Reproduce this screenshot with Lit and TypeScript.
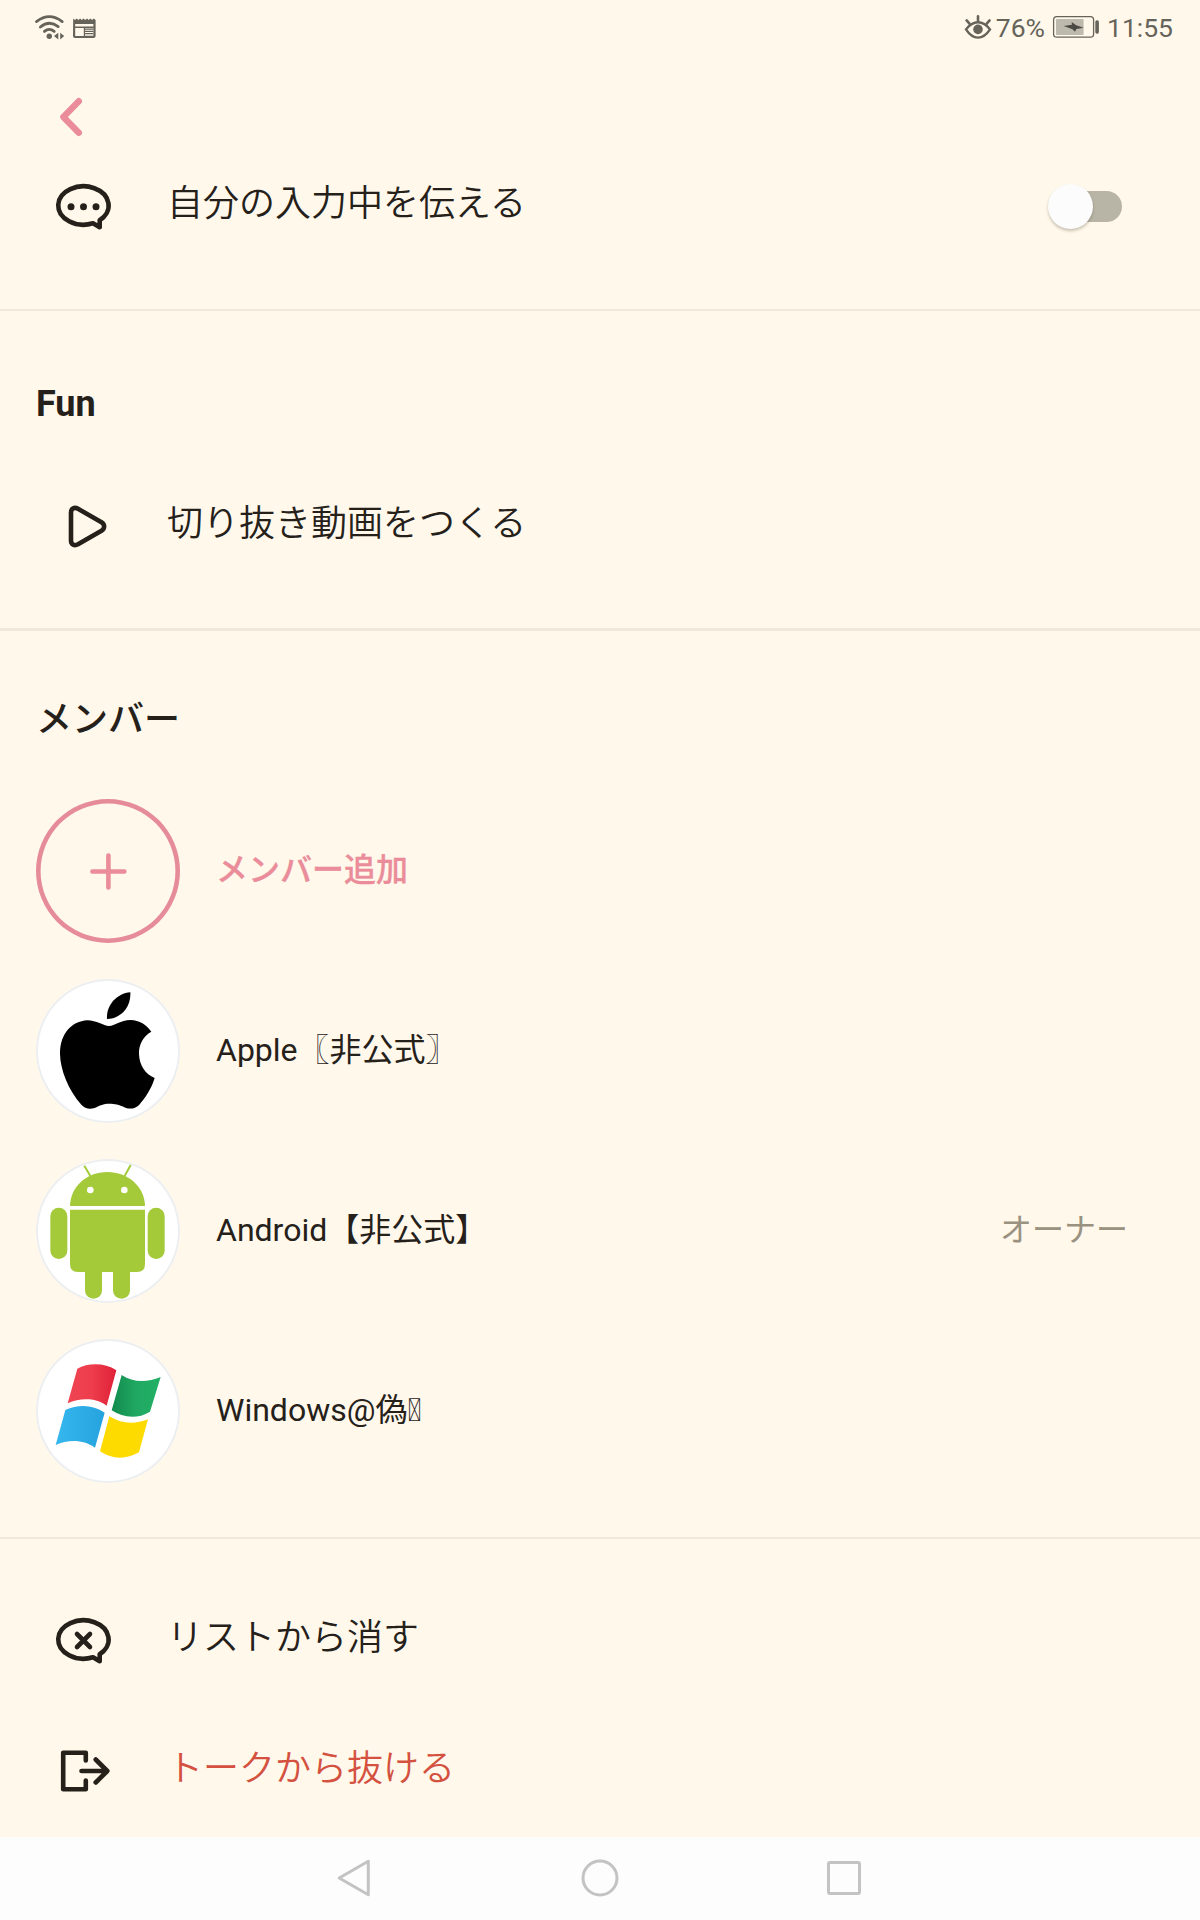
import { LitElement, html, css, svg, TemplateResult } from "lit";
import { customElement, property } from "lit/decorators.js";

const bubble = svg`<path d="M93 223.3A25.2 19.2 0 1 1 99.7 220.2V227.3Z" />`;

const icons: Record<string, TemplateResult> = {
  typing: html`<svg viewBox="50 178 68 56">
    <g class="stroke">${bubble}</g>
    <circle cx="71" cy="206.7" r="3.5" /><circle cx="83.5" cy="206.7" r="3.5" /><circle cx="96" cy="206.7" r="3.5" />
  </svg>`,
  play: html`<svg viewBox="50 498 68 56">
    <path class="stroke" d="M71 512.5C71 508.3 74.5 506.8 78 508.8L101.5 522.3C105 524.5 105 528.6 101.5 530.8L78 544.3C74.5 546.2 71 544.7 71 540.5Z" />
  </svg>`,
  remove: html`<svg viewBox="50 178 68 56">
    <g class="stroke">${bubble}<path stroke-linecap="round" d="M77 200L90 213M90 200L77 213" /></g>
  </svg>`,
  leave: html`<svg viewBox="50 1743.5 68 56">
    <path class="stroke" stroke-linecap="round" d="M85.8 1761V1753.2H63.2V1789.8H85.8V1781M81.5 1771.5H107M95.7 1760L107.3 1771.5L95.7 1783" />
  </svg>`,
};

const avatars: Record<string, TemplateResult> = {
  apple: html`<svg viewBox="108 597 432 432">
    <path d="M391 637C394 680 362 717 321 717C318 677 350 640 391 637Z" />
    <path d="M327 738C345 738 360 720 392 720C418 721 440 734 454 755C430 768 416 793 417 822C418 856 436 882 464 894C455 925 435 955 418 974C405 987 390 988 376 983C355 973 345 971 328 971C310 971 300 976 284 984C268 989 255 986 244 974C205 930 181 870 180 822C180 760 215 724 262 721C290 721 310 738 327 738Z" />
  </svg>`,
  android: html`<svg viewBox="108 57 432 432">
    <g fill="#a4ca39">
      <path d="M210 198C211 140 260 96 322 96S434 140 435 198Z" />
      <path d="M210 209H435V372Q435 396 411 396H234Q210 396 210 372Z" />
      <rect x="151" y="203" width="51" height="154" rx="25.5" />
      <rect x="443" y="203" width="51" height="154" rx="25.5" />
      <path d="M255 380H306V451A25.5 25.5 0 0 1 255 451Z" />
      <path d="M339 380H390V451A25.5 25.5 0 0 1 339 451Z" />
    </g>
    <path d="M253 77L271 108M392 75L374 108" fill="none" stroke="#a4ca39" stroke-width="6" />
    <circle cx="271" cy="150" r="10" fill="#fff" /><circle cx="373" cy="150" r="10" fill="#fff" />
  </svg>`,
  windows: html`<svg viewBox="108 597 432 432">
    <defs>
      <linearGradient id="r"><stop stop-color="#f04553" /><stop offset=".5" stop-color="#ee3d4c" /><stop offset="1" stop-color="#df2038" /></linearGradient>
      <linearGradient id="g"><stop stop-color="#128a4c" /><stop offset=".5" stop-color="#20a862" /><stop offset="1" stop-color="#22b066" /></linearGradient>
      <linearGradient id="b"><stop stop-color="#36b7ee" /><stop offset="1" stop-color="#25a3de" /></linearGradient>
    </defs>
    <path fill="url(#r)" d="M232 686C265 668 315 668 349 691L320 797C285 772 240 774 203 790Z" />
    <path fill="url(#g)" d="M365 705C400 728 440 728 482 711L450 815C412 838 370 834 335 811Z" />
    <path fill="url(#b)" d="M196 810C235 792 280 794 314 818L285 923C250 898 205 898 167 915Z" />
    <path fill="#fedb00" d="M328 829C365 852 405 854 444 838L417 937C378 960 335 958 300 934Z" />
  </svg>`,
};

@customElement("status-bar")
class StatusBar extends LitElement {
  static styles = css`
    :host {
      display: flex;
      align-items: center;
      height: 54px;
      padding: 0 27px 0 34px;
      box-sizing: border-box;
      color: #66635a;
      font: 26.5px/54px Roboto, sans-serif;
    }
    svg { display: block; flex: none; }
    .space { flex: 1; }
    .percent, .time { padding-top: 1px; }
    .percent { margin: 0 7px 0 4px; }
    .time { margin-left: 7px; }
    .eye { margin-right: -1px; }
  `;
  render() {
    return html`
      <svg width="64" height="54" viewBox="34 0 64 54" fill="currentColor">
        <g fill="none" stroke="currentColor" stroke-width="2.8" stroke-linecap="round">
          <path d="M36.5 21.6Q49.3 11.6 62.2 21.6M40.4 27Q49.3 19.8 58.2 26.6M44.4 31.4Q49.3 27.4 54.2 31.4" />
        </g>
        <circle cx="49.3" cy="36.2" r="2.7" />
        <path d="M54 36L58.3 32.8V39.4ZM64.2 36L60.2 32.8V39.6Z" />
        <path d="M73.2 18.5L75 20L76.7 18.5L78.4 20L80.1 18.5L81.8 20L83.5 18.5L85.2 20L87 18.5L88.7 20L90.4 18.5L92.1 20L93.8 18.5L95.6 20V36Q95.6 38 93.6 38H75Q73 38 73 36ZM75.2 24V26.6H93.4V24ZM75.2 28V36H83.8V28ZM85 28V35.8H93.4V28Z" fill-rule="evenodd" />
        <path d="M85 29.2H93.4M85 31.4H93.4M85 33.6H93.4" stroke="currentColor" stroke-width="1.2" />
      </svg>
      <span class="space"></span>
      <svg class="eye" width="30" height="54" viewBox="962 0 30 54" fill="none" stroke="currentColor" stroke-linecap="round">
        <path stroke-width="2.4" d="M965 29.4Q970.3 22.3 977 22.3T989 29.4Q983.7 37.6 977 37.6T965 29.4Z" />
        <path stroke-width="2.6" d="M977 16.3V21M965.6 20.4L968.5 23.6M988.6 20.4L985.7 23.6" />
        <circle cx="977" cy="29.4" r="4.8" fill="currentColor" stroke="none" />
      </svg>
      <span class="percent">76%</span>
      <svg width="48" height="54" viewBox="1051 0 48 54">
        <rect x="1052.6" y="16.6" width="40" height="20.6" rx="3.2" fill="none" stroke="currentColor" stroke-width="1.3" />
        <rect x="1055" y="19" width="27.6" height="16" rx="1" fill="#bdb9ac" />
        <rect x="1094.3" y="20.3" width="3.6" height="13.4" rx="1.6" fill="currentColor" />
        <path d="M1062.7 26L1071 24.8L1070.6 22L1075.2 25.2L1082.6 27.8L1075.4 29L1074 31.8L1071.4 29.3Z" fill="#4b4943" />
      </svg>
      <span class="time">11:55</span>
    `;
  }
}

@customElement("setting-row")
class SettingRow extends LitElement {
  @property() icon = "";
  @property() label = "";
  @property({ type: Boolean, reflect: true }) danger = false;
  static styles = css`
    :host {
      display: flex;
      align-items: center;
      height: 56px;
      padding: 0 78px 0 50px;
      color: #25211a;
    }
    svg { display: block; width: 68px; height: 56px; fill: currentColor; flex: none; }
    .stroke { fill: none; stroke: currentColor; stroke-width: 4.6; stroke-linejoin: round; }
    .label {
      flex: 1;
      margin-left: 49px;
      padding-bottom: 11px;
      font: 350 36px/45px "Noto Sans CJK JP", sans-serif;
    }
    :host([danger]) .label { color: #d4513f; }
  `;
  render() {
    return html`${icons[this.icon]}<span class="label">${this.label}</span><slot></slot>`;
  }
}

@customElement("toggle-switch")
class ToggleSwitch extends LitElement {
  static styles = css`
    :host { display: flex; align-items: center; width: 74px; height: 46px; }
    .track { display: flex; align-items: center; width: 69px; height: 31px; margin-left: 5px; border-radius: 16px; background: #b8b5a7; }
    .knob { flex: none; width: 45px; height: 45px; margin-left: -5px; border-radius: 50%; background: #fcfcfc; box-shadow: 0 2px 3px rgba(60, 50, 30, 0.28); }
  `;
  render() {
    return html`<div class="track"><div class="knob"></div></div>`;
  }
}

@customElement("member-row")
class MemberRow extends LitElement {
  @property() avatar = "";
  @property() name = "";
  @property() role = "";
  static styles = css`
    :host {
      display: flex;
      align-items: center;
      height: 144px;
      padding: 0 72px 0 36px;
      color: #25211a;
      font: 32px/48px Roboto, "Noto Sans CJK JP", sans-serif;
    }
    .avatar {
      width: 144px;
      height: 144px;
      box-sizing: border-box;
      border-radius: 50%;
      overflow: hidden;
      background: #fff;
      box-shadow: inset 0 0 0 2px #eceef0;
    }
    svg { display: block; width: 144px; height: 144px; }
    .add { background: none; box-shadow: inset 0 0 0 4.6px #e68c99; }
    .name, .role { padding-bottom: 2.5px; }
    .name { flex: 1; margin-left: 36px; }
    .accent { color: #ea8c99; font-weight: 500; -webkit-text-stroke: 0.3px #ea8c99; }
    .role { color: #9a9281; }
  `;
  render() {
    if (!this.avatar) {
      return html`
        <div class="avatar add">
          <svg viewBox="0 0 144 144"><path d="M72.4 56.5V88.5M56.4 72.5H88.4" stroke="#ea8c99" stroke-width="4.6" stroke-linecap="round" /></svg>
        </div>
        <span class="name accent">${this.name}</span>`;
    }
    return html`
      <div class="avatar">${avatars[this.avatar]}</div>
      <span class="name">${this.name}</span>
      <span class="role">${this.role}</span>`;
  }
}

@customElement("app-root")
class AppRoot extends LitElement {
  static styles = css`
    :host {
      display: flex;
      flex-direction: column;
      height: 1920px;
      background: #fff8eb;
      color: #25211a;
      overflow: hidden;
    }
    .header { display: flex; align-items: center; box-sizing: border-box; height: 124px; padding: 2px 0 0 56px; flex: none; }
    section { display: flex; flex-direction: column; box-sizing: border-box; flex: none; border-bottom: 2px solid #f1e8dc; }
    .typing { height: 133px; }
    .fun { height: 320px; padding-top: 67px; border-bottom-width: 3px; }
    .members { height: 908px; padding-top: 63px; }
    .actions { height: 298px; padding-top: 73px; gap: 75px; border: 0; }
    h2 { margin: 0; padding-left: 36px; font: 700 36px/52px Roboto, "Noto Sans CJK JP", sans-serif; }
    .members h2 { font-weight: 500; }
    .fun setting-row { margin-top: 68px; }
    .list { display: flex; flex-direction: column; gap: 36px; margin-top: 53px; }
    nav { display: flex; align-items: center; justify-content: center; gap: 205px; box-sizing: border-box; height: 83px; padding-bottom: 2px; background: #fdfdfd; }
    nav svg { display: block; width: 40px; height: 40px; fill: none; stroke: #c3c3c3; stroke-width: 3; stroke-linejoin: round; }
  `;
  render() {
    return html`
      <status-bar></status-bar>
      <div class="header">
        <svg width="30" height="42" viewBox="56 96 30 42"><path d="M78.8 101.2L63.4 117L78.8 132.8" fill="none" stroke="#ea8c99" stroke-width="6.4" stroke-linecap="round" stroke-linejoin="round" /></svg>
      </div>
      <section class="typing">
        <setting-row icon="typing" label="自分の入力中を伝える"><toggle-switch></toggle-switch></setting-row>
      </section>
      <section class="fun">
        <h2>Fun</h2>
        <setting-row icon="play" label="切り抜き動画をつくる"></setting-row>
      </section>
      <section class="members">
        <h2>メンバー</h2>
        <div class="list">
          <member-row name="メンバー追加"></member-row>
          <member-row avatar="apple" name="Apple〖非公式〗"></member-row>
          <member-row avatar="android" name="Android【非公式】" role="オーナー"></member-row>
          <member-row avatar="windows" name=${"Windows@偽\u{E0FF}"}></member-row>
        </div>
      </section>
      <section class="actions">
        <setting-row icon="remove" label="リストから消す"></setting-row>
        <setting-row icon="leave" label="トークから抜ける" danger></setting-row>
      </section>
      <nav>
        <svg viewBox="335 1858 40 40"><path d="M339.2 1878L368.3 1861.3V1894.7Z" /></svg>
        <svg viewBox="580 1858 40 40"><circle cx="600" cy="1878" r="17" /></svg>
        <svg viewBox="825 1858 40 40"><rect x="828.5" y="1862.5" width="31" height="31" rx="1.5" /></svg>
      </nav>
    `;
  }
}
